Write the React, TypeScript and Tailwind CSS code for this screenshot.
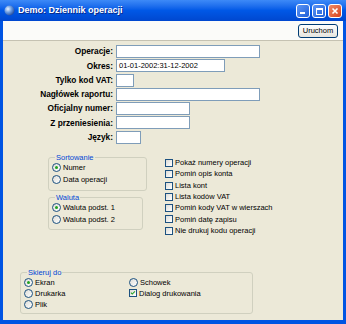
import React from 'react';

const font = { fontFamily: '"Liberation Sans", Arial, sans-serif' };

const Radio = ({ checked }: { checked?: boolean }) => (
  <span className="relative inline-block h-[9px] w-[9px] shrink-0 rounded-full border border-[#1c5180] bg-gradient-to-br from-[#dcdcd7] to-white">
    {checked && (
      <span className="absolute left-[2px] top-[2px] h-[3px] w-[3px] rounded-full bg-[#21a121]" />
    )}
  </span>
);

const Check = ({ checked }: { checked?: boolean }) => (
  <span className="relative inline-block h-[8px] w-[8px] shrink-0 border border-[#1c5180] bg-gradient-to-br from-[#dcdcd7] to-white">
    {checked && (
      <svg viewBox="0 0 8 8" className="absolute inset-0 h-full w-full">
        <path d="M1.2 3.6 L3 5.4 L6.6 1.8" stroke="#21a121" strokeWidth="1.4" fill="none" />
      </svg>
    )}
  </span>
);

const RadioRow = ({ label, checked }: { label: string; checked?: boolean }) => (
  <div className="flex h-[12px] items-center gap-[2px]">
    <Radio checked={checked} />
    <span className="text-[7.5px] leading-none text-black">{label}</span>
  </div>
);

const Group = ({ title, className, children }: { title: string; className?: string; children: React.ReactNode }) => (
  <fieldset className={`rounded-[3px] border border-[#d0d0bf] ${className ?? ''}`}>
    <legend className="ml-[3px] px-[1px] text-[7.5px] leading-[9px] text-[#0046d5]">{title}</legend>
    {children}
  </fieldset>
);

const fields: { label: string; w: string; value?: string }[] = [
  { label: 'Operacje:', w: 'w-[144px]' },
  { label: 'Okres:', w: 'w-[109px]', value: '01-01-2002:31-12-2002' },
  { label: 'Tylko kod VAT:', w: 'w-[18px]' },
  { label: 'Nagłówek raportu:', w: 'w-[144px]' },
  { label: 'Oficjalny numer:', w: 'w-[74px]' },
  { label: 'Z przeniesienia:', w: 'w-[74px]' },
  { label: 'Język:', w: 'w-[25px]' },
];

const options = [
  'Pokaż numery operacji',
  'Pomiń opis konta',
  'Lista kont',
  'Lista kodów VAT',
  'Pomiń kody VAT w wierszach',
  'Pomiń datę zapisu',
  'Nie drukuj kodu operacji',
];

export default function App() {
  return (
    <div className="flex h-[324px] w-[346px] flex-col bg-[#0054e3]" style={font}>
      {/* title bar */}
      <div className="flex h-[21px] shrink-0 items-center bg-gradient-to-b from-[#3d8af7] via-[#0058e6] to-[#0047cf] pl-[4px] pr-[4px]">
        <svg width="11" height="11" viewBox="0 0 11 11" className="shrink-0">
          <defs>
            <radialGradient id="g" cx="0.35" cy="0.35" r="0.7">
              <stop offset="0" stopColor="#e8f2ff" />
              <stop offset="0.5" stopColor="#6a9be0" />
              <stop offset="1" stopColor="#234a9a" />
            </radialGradient>
          </defs>
          <circle cx="5.5" cy="5.5" r="5" fill="url(#g)" />
        </svg>
        <span className="ml-[3px] text-[9px] font-bold text-white [text-shadow:1px_1px_0_#0a2a8a]">
          Demo: Dziennik operacji
        </span>
        <div className="ml-auto flex gap-[2px]">
          <div className="relative h-[14px] w-[14px] rounded-[3px] border border-white bg-gradient-to-br from-[#5c95f5] to-[#1f5fd8]">
            <span className="absolute bottom-[3px] left-[3px] h-[2px] w-[5px] bg-white" />
          </div>
          <div className="relative h-[14px] w-[14px] rounded-[3px] border border-white bg-gradient-to-br from-[#5c95f5] to-[#1f5fd8]">
            <span className="absolute left-[3px] top-[3px] h-[7px] w-[7px] border border-t-2 border-white" />
          </div>
          <div className="relative h-[14px] w-[14px] rounded-[3px] border border-white bg-gradient-to-br from-[#f08a64] to-[#d6401a]">
            <svg viewBox="0 0 12 12" className="absolute inset-0 h-full w-full">
              <path d="M3.5 3.5 L8.5 8.5 M8.5 3.5 L3.5 8.5" stroke="white" strokeWidth="1.6" />
            </svg>
          </div>
        </div>
      </div>

      {/* window body */}
      <div className="flex flex-1 flex-col border-x-[3px] border-b-[4px] border-[#0054e3] bg-[#ece9d8]">
        <div className="flex h-[20px] shrink-0 items-start justify-end border-b border-[#c5c2b2] bg-[#fbfbf9] pr-[5px] pt-[3px]">
          <button className="flex h-[14px] w-[40px] items-center justify-center rounded-[3px] border border-[#003c74] bg-gradient-to-b from-white to-[#e6e5de] text-[7.5px] text-black">
            Uruchom
          </button>
        </div>

        <div className="grid grid-cols-[110px_auto] gap-x-[3px] gap-y-[1.3px] pt-[4px]">
          {fields.map((f) => (
            <React.Fragment key={f.label}>
              <div className="flex h-[13px] items-center justify-end text-[8.3px] font-bold text-black">{f.label}</div>
              <div className={`flex h-[13px] items-center border border-[#7f9db9] bg-white px-[2px] text-[7.5px] text-black ${f.w}`}>
                {f.value}
              </div>
            </React.Fragment>
          ))}
        </div>

        <div className="mt-[9px] flex h-[115px] shrink-0">
          <div className="ml-[45px] flex w-[99px] flex-col gap-[2px]">
            <Group title="Sortowanie" className="h-[38px] pl-[3px]">
              <RadioRow label="Numer" checked />
              <RadioRow label="Data operacji" />
            </Group>
            <Group title="Waluta" className="mr-[4px] h-[37px] pl-[3px]">
              <RadioRow label="Waluta podst. 1" checked />
              <RadioRow label="Waluta podst. 2" />
            </Group>
          </div>
          <div className="ml-[18px] flex flex-col pt-[4.5px]">
            {options.map((o) => (
              <div key={o} className="flex h-[11.3px] items-center gap-[2px]">
                <Check />
                <span className="text-[7.5px] leading-none text-black">{o}</span>
              </div>
            ))}
          </div>
        </div>

        <Group title="Skieruj do" className="ml-[17px] h-[46px] w-[233px] pl-[3px]">
          <div className="flex">
            <div className="flex w-[105px] flex-col">
              <div className="flex h-[11px] items-center gap-[2px]"><Radio checked /><span className="text-[7.5px] leading-none">Ekran</span></div>
              <div className="flex h-[11px] items-center gap-[2px]"><Radio /><span className="text-[7.5px] leading-none">Drukarka</span></div>
              <div className="flex h-[11px] items-center gap-[2px]"><Radio /><span className="text-[7.5px] leading-none">Plik</span></div>
            </div>
            <div className="flex flex-col">
              <div className="flex h-[11px] items-center gap-[2px]"><Radio /><span className="text-[7.5px] leading-none">Schowek</span></div>
              <div className="flex h-[11px] items-center gap-[2px]"><Check checked /><span className="text-[7.5px] leading-none">Dialog drukowania</span></div>
            </div>
          </div>
        </Group>
      </div>
    </div>
  );
}
